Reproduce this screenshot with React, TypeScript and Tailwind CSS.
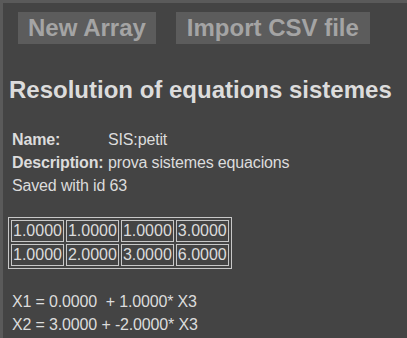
import React from 'react';

const rows = [
  ['1.0000', '1.0000', '1.0000', '3.0000'],
  ['1.0000', '2.0000', '3.0000', '6.0000'],
];

const App = () => {
  return (
    <div
      className="h-[338px] w-[407px] overflow-hidden border-l-[3px] border-t-[3px] border-[#5a5a5a] bg-[#444444] text-[#dcdcdc]"
      style={{fontFamily: '"Liberation Sans", Arial, sans-serif'}}
    >
      <div className="flex gap-5 pl-[15px] pt-[9px]">
        <button className="h-[32px] bg-[#5c5c5c] px-[10px] text-[24px] font-bold leading-[32px] text-[#a4a4a4]">
          New Array
        </button>
        <button className="h-[32px] bg-[#5c5c5c] px-[11px] text-[24px] font-bold leading-[32px] text-[#a4a4a4]">
          Import CSV file
        </button>
      </div>
      <h1 className="mt-[32px] pl-[6px] text-[24px] font-bold leading-[28px] text-[#dcdcdc]">
        Resolution of equations sistemes
      </h1>
      <div className="mt-[24px] grid grid-cols-[96px_auto] pl-[9px] text-[16px] leading-[23px] tracking-[-0.15px]">
        <span className="font-bold">Name:</span>
        <span>SIS:petit</span>
        <span className="font-bold">Description:</span>
        <span>prova sistemes equacions</span>
        <span className="col-span-2">Saved with id 63</span>
      </div>
      <table className="ml-[5px] mt-[20px] border-separate border-spacing-[2px] border border-[#c8c8c8] text-[16px] leading-[20px]">
        <tbody>
          {rows.map((r, i) => (
            <tr key={i}>
              {r.map((c, j) => (
                <td key={j} className="border border-[#c8c8c8] px-[1px]">
                  {c}
                </td>
              ))}
            </tr>
          ))}
        </tbody>
      </table>
      <div className="mt-[21px] pl-[9px] text-[16px] leading-[23px] tracking-[-0.15px]">
        <div>X1 = 0.0000 &nbsp;+ 1.0000* X3</div>
        <div>X2 = 3.0000 + -2.0000* X3</div>
      </div>
    </div>
  );
};

export default App;
